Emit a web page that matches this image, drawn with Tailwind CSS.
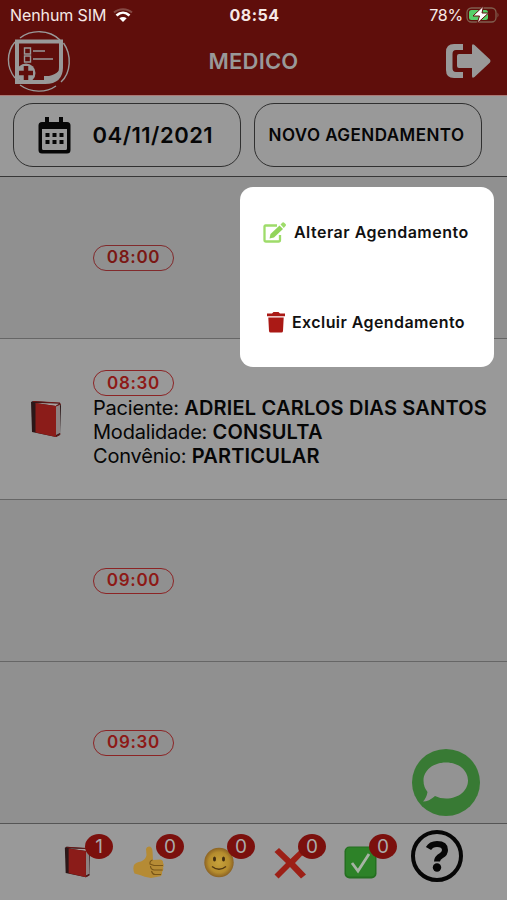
<!DOCTYPE html>
<html lang="pt-BR">
<head>
<meta charset="utf-8">
<meta name="viewport" content="width=device-width, initial-scale=1">
<title>Agenda</title>
<script src="https://cdn.jsdelivr.net/npm/@tailwindcss/browser@4"></script>
</head>
<body class="relative h-[900px] w-[507px] overflow-hidden bg-[#999] font-['Inter',sans-serif] text-[#060606]">
<svg class="hidden">
  <symbol id="book" viewBox="0 0 32 38">
    <path d="M1 2L3 1L30 3L31 6L30 35L26 37L2 32Z" fill="#2b1718"/>
    <path d="M5 3L29 3.500L26 6Z" fill="#aaa09e"/>
    <path d="M26 6L30 4V33L26 35Z" fill="#8d8181"/>
    <path d="M5.500 3L26 6V37L5.500 32.500Z" fill="#8b1c19"/>
    <path d="M3 1.500L30 3M26 6L31 4M26 36.500L30.500 34" stroke="#6f1715" fill="none"/>
  </symbol>
</svg>
<div class="flex h-[900px] flex-col">
  <header class="flex h-[95px] flex-col bg-[#5f0e0b]">
    <div class="flex h-[30px] items-center justify-between pl-[10px] pr-[8px] text-[16px] text-[#f6e9e6]">
      <div class="flex w-[160px] items-center gap-[7px]">
        <span class="whitespace-nowrap tracking-[-0.1px]">Nenhum SIM</span>
        <svg width="20" height="15" viewBox="0 0 20 15" fill="none"><path d="M1 4.500C6 0 14 0 19 4.500" stroke="#854a45" stroke-width="2"/><path d="M3.500 7.500C7.500 3.800 12.500 3.800 16.500 7.500" stroke="#fff" stroke-width="2.600"/><path d="M6.300 10.300Q10 7.500 13.700 10.300L10 14Z" fill="#fff"/></svg>
      </div>
      <span class="font-bold tracking-[0.5px]">08:54</span>
      <div class="flex w-[160px] items-center justify-end gap-[3px]">
        <span class="tracking-[-0.2px]">78%</span>
        <svg width="33" height="18" viewBox="0 0 33 18"><rect x="1" y="2" width="29" height="14" rx="4.500" fill="none" stroke="#805e4f" stroke-width="1.300"/><path d="M31.500 6.500v5q2-2.500 0-5" fill="#805e4f"/><rect x="3" y="4" width="19" height="10" rx="2.500" fill="#55cf69"/><path d="M17.500 0L7 10h6.500L11 17.500L22.500 7H16Z" fill="#fff" stroke="#5f0e0b" stroke-width="1"/></svg>
      </div>
    </div>
    <div class="flex h-[65px] items-center justify-between pl-[7px] pr-[16px]">
      <svg class="-mt-[2px]" width="64" height="64" viewBox="0 0 64 64" fill="none" stroke="#999">
        <g stroke-width="1.400"><path d="M13 8C24-.5 42-1 53 10M56.500 13C65 25 64 43 54 52M49 56C39 63 24 63 13 55M8 48C-1 37-.5 22 8 12"/></g>
        <path d="M10 11.500H54V37Q54 52 38 52H10Z" stroke-width="4"/>
        <path d="M37 51.500H41Q55 50 56 34Q51 47 37 46Z" fill="#999" stroke="none"/>
        <path d="M17.500 18h6v6h-6zM17.500 26h6v6h-6z" stroke-width="1.400"/><path d="M26 21H38M26 29H46" stroke-width="1.700"/>
        <circle cx="19" cy="43" r="9.500" fill="#999" stroke="none"/><path d="M19 36v14M12 43h14" stroke="#5f0e0b" stroke-width="4.500"/>
      </svg>
      <h1 class="-mt-[2px] ml-[9px] text-[22px] font-semibold tracking-[0.2px] text-[#999]">MEDICO</h1>
      <svg class="-mt-[3px] ml-[18px]" width="46" height="36" viewBox="0 0 46 36"><path d="M18 1v6H11Q7.500 7 7.500 11V25Q7.500 29 11 29H18v6H9Q1 35 1 27V9Q1 1 9 1Z" fill="#999"/><path d="M14 11H27V3Q27 0 29.500 2L45 16.500Q46 18 45 19.500L29.500 34Q27 36 27 33V25H14Q12 25 12 23V13Q12 11 14 11Z" fill="#999"/></svg>
    </div>
  </header>

  <nav class="flex h-[82px] items-start gap-[13px] border-t border-b border-t-[#aa7875] border-b-[#373737] bg-[#999] pl-[12.500px] pt-[7px]">
    <button class="flex h-[64px] w-[228px] items-center rounded-[20px] border-[1.5px] border-[#303030] pl-[24px]">
      <svg width="33" height="37" viewBox="0 0 33 37" fill="#060606"><path d="M7 0h4v5h10V0h4v5h4q3.500 0 3.500 3.500v24.500q0 3.500-3.500 3.500H4q-3.500 0-3.500-3.500V8.500Q.5 5 4 5h3zM4 12v19.500q0 1.500 1.500 1.500h22q1.500 0 1.500-1.500V12z" fill-rule="evenodd"/><path d="M7.500 16h4v4h-4zm7 0h4v4h-4zm7 0h4v4h-4zm-14 7h4v4h-4zm7 0h4v4h-4zm7 0h4v4h-4z"/></svg>
      <span class="ml-[22px] whitespace-nowrap text-[22px] font-semibold tracking-[0.5px]">04/11/2021</span>
    </button>
    <button class="flex h-[64px] w-[228px] items-center justify-center whitespace-nowrap rounded-[20px] border-[1.5px] border-[#303030] pr-[2px] pt-[1px] text-[17px] font-semibold tracking-[0.45px]">NOVO AGENDAMENTO</button>
  </nav>

  <main class="flex flex-col">
    <section class="flex h-[162px] items-center border-b border-[#666] bg-[#909090] pl-[93px]">
      <span class="flex h-[26px] w-[81px] items-center justify-center rounded-full border-[1.5px] border-[#812a2c] pt-[1px] text-[17px] font-semibold tracking-[0.7px] text-[#7a1714]">08:00</span>
    </section>
    <section class="flex h-[161px] items-center border-b border-[#666] bg-[#999] pl-[30px]">
      <svg width="32" height="38"><use href="#book"/></svg>
      <div class="ml-[31px] whitespace-nowrap text-[20px] leading-[24.200px] tracking-[-0.2px]">
        <span class="flex h-[26px] w-[81px] items-center justify-center rounded-full border-[1.5px] border-[#8c2425] text-[17px] font-semibold tracking-[0.7px] text-[#8d1916]">08:30</span>
        <p>Paciente: <b class="font-semibold tracking-[0.2px]">ADRIEL CARLOS DIAS SANTOS</b></p>
        <p>Modalidade: <b class="font-semibold tracking-[0.2px]">CONSULTA</b></p>
        <p>Convênio: <b class="font-semibold tracking-[0.2px]">PARTICULAR</b></p>
      </div>
    </section>
    <section class="flex h-[162px] items-center border-b border-[#666] bg-[#909090] pl-[93px]">
      <span class="flex h-[26px] w-[81px] items-center justify-center rounded-full border-[1.5px] border-[#8c2425] pt-[1px] text-[17px] font-semibold tracking-[0.7px] text-[#8d1916]">09:00</span>
    </section>
    <section class="flex h-[162px] items-center border-b border-[#555] bg-[#909090] pl-[93px]">
      <span class="flex h-[26px] w-[81px] items-center justify-center rounded-full border-[1.5px] border-[#8c2425] pt-[1px] text-[17px] font-semibold tracking-[0.7px] text-[#8d1916]">09:30</span>
    </section>
  </main>

  <footer class="flex h-[76px] items-start bg-[#999] pl-[64px] pt-[6px]">
    <div class="relative h-[52px] w-[71px]">
      <svg class="mt-[16px]" width="27" height="32" viewBox="0 0 32 38" preserveAspectRatio="none"><use href="#book"/></svg>
      <span class="absolute left-[21px] top-[4px] flex h-[25px] w-[28px] items-center justify-center rounded-[50%] bg-[#7b100d] pt-[1px] text-[19px] text-[#aaa]">1</span>
    </div>
    <div class="relative h-[52px] w-[71px]">
      <svg class="-ml-[2px] mt-[16px]" width="32" height="33" viewBox="0 0 32 33"><path d="M1 19Q3 16 8 15.500Q13 13 13.500 9L13 3Q13.500 .5 16 .5Q19 .5 19.500 5L20 14L27 13.500Q30.500 14 30 17Q31.500 19 30 21.500Q31 24 29 26Q29.500 30 26 30.500L18 32Q11 31 7 29L1.500 27.500Q-.5 23 1 19Z" fill="#b58b35"/><path d="M19.500 14Q16.500 15 17 18L21 19.500H30M17.500 20Q17.500 23.500 21 24H29.500M18.500 25Q19.500 28.500 22 28.500H28" fill="none" stroke="#795618" stroke-width="1.100"/></svg>
      <span class="absolute left-[21px] top-[4px] flex h-[25px] w-[28px] items-center justify-center rounded-[50%] bg-[#7b100d] pt-[1px] text-[19px] text-[#aaa]">0</span>
    </div>
    <div class="relative h-[52px] w-[71px]">
      <svg class="-ml-[2px] mt-[17px]" width="30" height="31" viewBox="0 0 30 31"><defs><radialGradient id="face"><stop stop-color="#c7a23c"/><stop offset=".7" stop-color="#b58c2d"/><stop offset="1" stop-color="#8c6323"/></radialGradient></defs><circle cx="15" cy="15.500" r="14.700" fill="url(#face)"/><ellipse cx="10.500" cy="12" rx="1.500" ry="2.500" fill="#402b10"/><ellipse cx="19.500" cy="12" rx="1.500" ry="2.500" fill="#402b10"/><path d="M8 19.500q7 5.500 14 0" fill="none" stroke="#513711" stroke-width="1.400"/></svg>
      <span class="absolute left-[21px] top-[4px] flex h-[25px] w-[28px] items-center justify-center rounded-[50%] bg-[#7b100d] pt-[1px] text-[19px] text-[#aaa]">0</span>
    </div>
    <div class="relative h-[52px] w-[71px]">
      <svg class="-ml-[3px] mt-[17px]" width="32" height="32" viewBox="0 0 32 32"><path d="M5 1L16.500 12L28 1L31.500 5L21 16L32 27.500L27 31.500L16 20L4.500 31.500L.5 27.500L12 16L.5 5Z" fill="#9c2017"/></svg>
      <span class="absolute left-[21px] top-[4px] flex h-[25px] w-[28px] items-center justify-center rounded-[50%] bg-[#7b100d] pt-[1px] text-[19px] text-[#aaa]">0</span>
    </div>
    <div class="relative h-[52px] w-[63px]">
      <svg class="-ml-[4px] mt-[16px]" width="33" height="33" viewBox="0 0 33 33"><rect x=".5" y=".5" width="32" height="32" rx="5" fill="#246f20"/><rect x="2" y="1.500" width="29" height="29" rx="4" fill="#2d8228"/><path d="M8 17L14 25L25 8" fill="none" stroke="#a7b3a4" stroke-width="2.800"/></svg>
      <span class="absolute left-[21px] top-[4px] flex h-[25px] w-[28px] items-center justify-center rounded-[50%] bg-[#7b100d] pt-[1px] text-[19px] text-[#aaa]">0</span>
    </div>
    <svg width="52" height="52" viewBox="0 0 52 52" fill="none" stroke="#060606"><circle cx="26" cy="26" r="24" stroke-width="4"/><path d="M17.500 18.500Q20 14 26 14Q34 14 34 20Q34 23.500 30.500 25.500Q26 28 26 31.500" stroke-width="6"/><circle cx="26" cy="37.500" r="4.200" fill="#060606" stroke="none"/></svg>
  </footer>
</div>

<button class="absolute left-[412px] top-[749px] h-[67px] w-[68px]">
  <svg width="68" height="67" viewBox="0 0 68 67"><ellipse cx="34" cy="33.500" rx="34" ry="33.500" fill="#387a34"/><path d="M34 13.500C47 13.500 56 21.500 56 31.500S47 49.500 34 49.500Q28 49.500 23 47Q17 52.500 11 52.500Q14.500 49 15.500 43Q11.500 38 11.500 31.500C11.500 21.500 21 13.500 34 13.500Z" fill="#939393"/></svg>
</button>

<aside class="absolute left-[240px] top-[187px] flex h-[180px] w-[253.500px] flex-col rounded-[13px] bg-white text-[16px] font-semibold text-[#111]">
  <button class="flex h-[90px] items-center gap-[8px] whitespace-nowrap pl-[23px] tracking-[0.48px]">
    <svg width="23" height="21" viewBox="0 0 23 21"><path d="M14 3.500H2.500Q1.500 3.500 1.500 4.500V18Q1.500 19.500 3 19.500H15.500Q17 19.500 17 18V13" fill="none" stroke="#9edc6a" stroke-width="2.300"/><path d="M16.500 3.500L20 7L11 15.500L6.500 16.500L7.500 12Z" fill="#91d45a"/><path d="M17.500 2.500L19.500.5Q20.500 0 21.500 1L22.500 2Q23.500 3 22.500 4L20.800 6Z" fill="#9edc6a"/></svg>
    <span>Alterar Agendamento</span>
  </button>
  <button class="flex h-[90px] items-center gap-[7px] whitespace-nowrap pl-[27px] tracking-[0.42px]">
    <svg width="18" height="21" viewBox="0 0 18 21" fill="#aa1915"><path d="M0 1.500h5L6.500 0h5L13 1.500h5v2.700H0zM1.300 5.500h15.400L16 19q-.1 1.500-1.500 1.500h-11Q2.200 20.500 2 19z"/></svg>
    <span>Excluir Agendamento</span>
  </button>
</aside>
</body>
</html>
